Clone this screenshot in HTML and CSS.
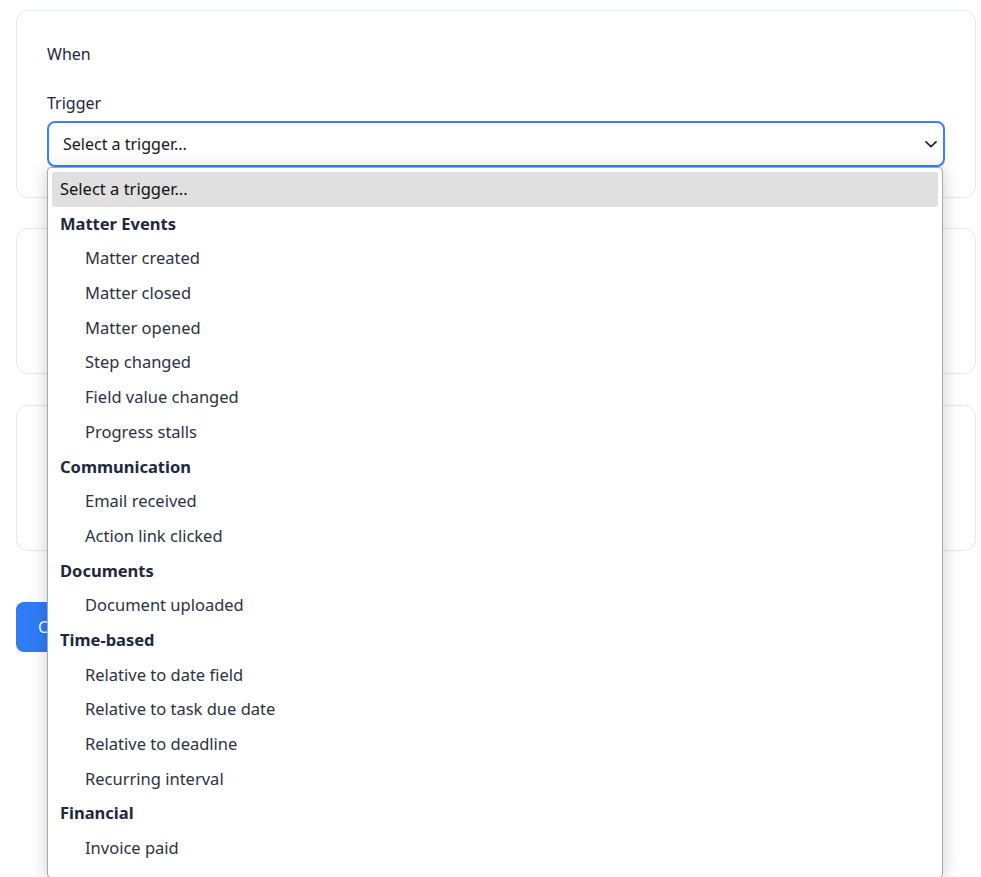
FILE: index.html
```html
<!DOCTYPE html>
<html lang="en">
<head>
    <meta charset="UTF-8">
    <title>New automation</title>
    <link rel="stylesheet" href="styles.css">
</head>
<body>
    <div class="builder">
        <div class="card">
            <div class="card-title">When</div>
            <label class="field-label">Trigger</label>
            <div class="select-wrap">
                <div class="select-box">
                    <span>Select a trigger...</span>
                    <svg class="chevron" width="14" height="14" viewBox="0 0 14 14"><path d="M2 4.8 L7 9.6 L12 4.8" fill="none" stroke="#1f2937" stroke-width="1.8" stroke-linecap="round" stroke-linejoin="round"/></svg>
                </div>
                <ul class="dropdown">
                    <li class="opt selected">Select a trigger...</li>
                    <li class="group">Matter Events</li>
                    <li class="opt child">Matter created</li>
                    <li class="opt child">Matter closed</li>
                    <li class="opt child">Matter opened</li>
                    <li class="opt child">Step changed</li>
                    <li class="opt child">Field value changed</li>
                    <li class="opt child">Progress stalls</li>
                    <li class="group">Communication</li>
                    <li class="opt child">Email received</li>
                    <li class="opt child">Action link clicked</li>
                    <li class="group">Documents</li>
                    <li class="opt child">Document uploaded</li>
                    <li class="group">Time-based</li>
                    <li class="opt child">Relative to date field</li>
                    <li class="opt child">Relative to task due date</li>
                    <li class="opt child">Relative to deadline</li>
                    <li class="opt child">Recurring interval</li>
                    <li class="group">Financial</li>
                    <li class="opt child">Invoice paid</li>
                </ul>
            </div>
        </div>

        <div class="card short"></div>

        <div class="card short"></div>

        <button class="save-button">Create automation</button>
    </div>
</body>
</html>
```

FILE: styles.css
```css
* {
    box-sizing: border-box;
}
html, body {
    height: 100%;
}
body {
    margin: 0;
    overflow: hidden;
    font-family: "Noto Sans", "Open Sans", sans-serif;
    background: #fff;
    color: #1e293b;
}

.builder {
    padding: 10px 5px 0 16px;
    display: flex;
    flex-direction: column;
    align-items: flex-start;
}

.card {
    width: 960px;
    border: 1px solid #e2e8f0;
    border-radius: 12px;
    padding: 30px;
    margin-bottom: 30px;
}

.card.short {
    height: 146px;
    margin-bottom: 31px;
}

.card-title {
    font-size: 16px;
    line-height: 24px;
    margin-top: 1px;
    margin-bottom: 25px;
}

.field-label {
    display: block;
    font-size: 16px;
    line-height: 24px;
    margin-bottom: 6px;
}

.select-wrap {
    position: relative;
}

.select-box {
    height: 46px;
    border: 2px solid #3b82f6;
    border-radius: 8px;
    padding: 0 5px 0 14px;
    display: flex;
    align-items: center;
    justify-content: space-between;
    font-size: 16px;
    color: #111827;
}

.chevron {
    display: block;
}

.dropdown {
    position: absolute;
    top: 46px;
    left: 0;
    width: 896px;
    margin: 0;
    padding: 4px 4px 11px;
    list-style: none;
    background: #fff;
    border: 1px solid #a8a8a8;
    border-radius: 4px;
    box-shadow: 0 2px 18px rgba(0, 0, 0, 0.2);
    z-index: 10;
}

.dropdown li {
    height: 34.7px;
    line-height: 34.7px;
    padding-left: 8px;
    font-size: 16.5px;
    white-space: nowrap;
}

.dropdown .selected {
    background: #e0e0e0;
    border-radius: 3px;
    color: #111;
}

.dropdown .group {
    font-weight: 700;
    color: #1e293b;
}

.dropdown .child {
    padding-left: 33px;
    color: #2a3342;
}

.save-button {
    margin-top: 20px;
    height: 50px;
    padding: 0 22px;
    border: none;
    border-radius: 8px;
    background: #2f7cf6;
    color: #fff;
    font-family: inherit;
    font-size: 16px;
    cursor: pointer;
}
```
